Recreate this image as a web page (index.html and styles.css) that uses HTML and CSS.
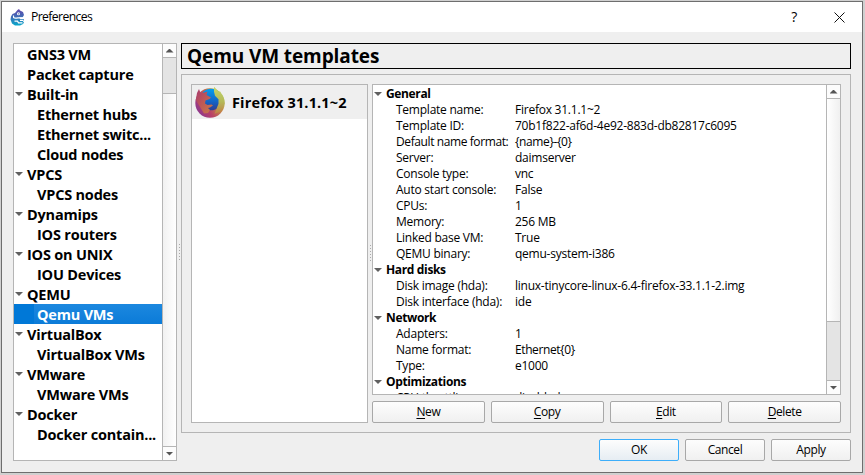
FILE: index.html
```html
<!DOCTYPE html>
<html lang="en">
<head>
<meta charset="utf-8">
<title>Preferences</title>
<link rel="stylesheet" href="styles.css">
</head>
<body>
<div class="window">
  <header class="titlebar">
    <svg class="app-icon" viewBox="0 0 16 17">
      <defs><linearGradient id="gecko" x1="0" y1="0" x2="0" y2="1"><stop offset="0" stop-color="#6446ac"/><stop offset=".5" stop-color="#3d6fb7"/><stop offset="1" stop-color="#08a9cb"/></linearGradient></defs>
      <path fill="url(#gecko)" d="M7.500 1L9 0l1 1.500 3 1.500 1 3-1.500 2.500H9L10.500 10H14l-1 2.500 1 1-1 1.500-3 1.500H5l-3-2-1.500-4L1 7.500l1.500-2.500L5 4z"/>
      <path fill="none" stroke="#fff" stroke-width="1.200" d="M3.500 6.500C3 9.500 5 9.500 8 8.800h6M4.500 12.200h3l1 1.600h4M10 11.300h3"/>
      <circle cx="8.500" cy="4.800" r="1.500" fill="#fff"/><circle cx="8.700" cy="4.800" r=".6" fill="#354887"/>
    </svg>
    <span class="caption">Preferences</span>
    <span class="help">?</span>
    <svg class="close" viewBox="0 0 11 11"><path d="M.5.5l10 10M10.500.5l-10 10" stroke="#111" fill="none"/></svg>
  </header>
  <main class="content">
    <nav class="sidebar frame">
      <ul class="nav-tree">
        <li>GNS3 VM</li>
        <li>Packet capture</li>
        <li class="open">Built-in</li>
        <li class="child">Ethernet hubs</li>
        <li class="child">Ethernet switc...</li>
        <li class="child">Cloud nodes</li>
        <li class="open">VPCS</li>
        <li class="child">VPCS nodes</li>
        <li class="open">Dynamips</li>
        <li class="child">IOS routers</li>
        <li class="open">IOS on UNIX</li>
        <li class="child">IOU Devices</li>
        <li class="open">QEMU</li>
        <li class="child selected">Qemu VMs</li>
        <li class="open">VirtualBox</li>
        <li class="child">VirtualBox VMs</li>
        <li class="open">VMware</li>
        <li class="child">VMware VMs</li>
        <li class="open">Docker</li>
        <li class="child">Docker contain...</li>
      </ul>
      <div class="scrollbar">
        <div class="step up"></div><div class="thumb thumb-top"></div><div class="track"></div><div class="step down"></div>
      </div>
    </nav>
    <div class="splitter"></div>
    <section class="page">
      <h1>Qemu VM templates</h1>
      <div class="group">
        <div class="templates frame">
          <div class="template">
            <svg class="firefox" viewBox="0 0 32 32">
              <defs>
                <linearGradient id="fox" gradientUnits="userSpaceOnUse" x1="3" y1="26" x2="30" y2="10"><stop offset="0" stop-color="#8a3890"/><stop offset=".35" stop-color="#b94067"/><stop offset=".7" stop-color="#c58545"/><stop offset="1" stop-color="#b5cf64"/></linearGradient>
                <linearGradient id="globe" x1="0" y1="0" x2="0" y2="1"><stop offset="0" stop-color="#009ff0"/><stop offset=".6" stop-color="#1463c5"/><stop offset="1" stop-color="#303c91"/></linearGradient>
                <linearGradient id="tail" x1="0" y1="0" x2="0" y2="1"><stop offset="0" stop-color="#c0d66e"/><stop offset=".55" stop-color="#b5b957"/><stop offset="1" stop-color="#c08046"/></linearGradient>
                <linearGradient id="face" x1="0" y1="0" x2="1" y2="1"><stop offset="0" stop-color="#a83a70"/><stop offset=".5" stop-color="#c05a55"/><stop offset="1" stop-color="#c77c48"/></linearGradient>
              </defs>
              <circle cx="16" cy="17" r="14.700" fill="url(#fox)"/>
              <circle cx="17" cy="13.500" r="10.800" fill="url(#globe)"/>
              <path fill="url(#face)" d="M1.800 14L3 7l2-4 1.500 4 4-.5 3-1-1 3.500 4.500 2.500-1.500 1.500-4 1.500-.5 3 2.500 1.500 4-.5 1.500 1-3 2-2 .5 2 2-2 3-4 .5z"/>
              <path fill="url(#tail)" d="M20 .8l5 5 1-.5 4 7.500.6 5-4 8-6.100 2 2-5 2-5 0-4.500-3.500-3.500-1-4z"/>
            </svg>
            <span>Firefox 31.1.1~2</span>
          </div>
        </div>
        <div class="splitter inner"></div>
        <div class="details">
          <div class="info frame">
            <div class="properties">
              <h2>General</h2>
              <dl>
                <dt>Template name:</dt><dd>Firefox 31.1.1~2</dd>
                <dt>Template ID:</dt><dd>70b1f822-af6d-4e92-883d-db82817c6095</dd>
                <dt class="tight">Default name format:</dt><dd class="tight">{name}-{0}</dd>
                <dt>Server:</dt><dd>daimserver</dd>
                <dt>Console type:</dt><dd>vnc</dd>
                <dt>Auto start console:</dt><dd>False</dd>
                <dt>CPUs:</dt><dd>1</dd>
                <dt>Memory:</dt><dd>256 MB</dd>
                <dt>Linked base VM:</dt><dd>True</dd>
                <dt>QEMU binary:</dt><dd>qemu-system-i386</dd>
              </dl>
              <h2>Hard disks</h2>
              <dl>
                <dt>Disk image (hda):</dt><dd>linux-tinycore-linux-6.4-firefox-33.1.1-2.img</dd>
                <dt>Disk interface (hda):</dt><dd>ide</dd>
              </dl>
              <h2>Network</h2>
              <dl>
                <dt>Adapters:</dt><dd>1</dd>
                <dt>Name format:</dt><dd class="tight">Ethernet{0}</dd>
                <dt>Type:</dt><dd>e1000</dd>
              </dl>
              <h2>Optimizations</h2>
              <dl><dt>CPU throttling:</dt><dd>disabled</dd></dl>
            </div>
            <div class="scrollbar">
              <div class="step up"></div><div class="track"></div><div class="thumb thumb-bottom"></div><div class="step down"></div>
            </div>
          </div>
          <div class="actions">
            <button><u>N</u>ew</button><button><u>C</u>opy</button><button><u>E</u>dit</button><button><u>D</u>elete</button>
          </div>
        </div>
      </div>
      <footer class="dialog-buttons">
        <button class="default">OK</button><button>Cancel</button><button>Apply</button>
      </footer>
    </section>
  </main>
</div>
</body>
</html>
```

FILE: styles.css
```css
* { box-sizing: border-box; }
body {
  margin: 0;
  width: 865px;
  height: 475px;
  padding: 1px 2px 2px 1px;
  overflow: hidden;
  background: #d0d0d0;
  color: #000;
  font: 12px/16px "Open Sans", "Noto Sans", sans-serif;
  letter-spacing: -0.24px;
}
.window {
  width: 862px;
  height: 472px;
  border: 1px solid #6e6e6e;
  background: #efefef;
}
.titlebar {
  display: flex;
  align-items: center;
  height: 30px;
  padding: 0 17px 0 8px;
  background: #fff;
}
.app-icon { width: 16px; height: 17px; }
.caption { margin-left: 5px; letter-spacing: -0.6px; font-size: 12.2px; }
.help { margin-left: auto; margin-right: 37px; font-size: 14px; }
.close { width: 11px; height: 11px; }
.content { display: flex; padding: 11px 10px 0 11px; }
.frame { border: 1px solid #b5b5b5; background: #fff; }
.sidebar { display: flex; width: 164px; height: 418px; }
.nav-tree {
  flex: 1;
  margin: 0;
  padding: 0;
  list-style: none;
  font: bold 14.5px/22px "Open Sans", "Noto Sans", sans-serif;
  letter-spacing: -0.2px;
}
.nav-tree li { height: 20px; padding-left: 13px; white-space: nowrap; }
.nav-tree .child { padding-left: 23px; }
.nav-tree .open, .properties h2 { display: flex; }
.nav-tree .open { padding-left: 1px; }
.nav-tree .open::before, .properties h2::before {
  content: "";
  width: 8px;
  height: 4px;
  margin: 8px 4px 0 0;
  background: #606060;
  clip-path: polygon(0 0, 100% 0, 50% 100%);
}
.nav-tree .selected {
  color: #fff;
  background: linear-gradient(to right, #0078d7 20px, transparent 20px), linear-gradient(#1c88df, #0b7bd8);
}
.scrollbar {
  display: flex;
  flex-direction: column;
  width: 14px;
  border-left: 1px solid #b5b5b5;
}
.step { display: grid; place-items: center; height: 14px; background: #fcfcfc; }
.step::before { content: ""; width: 8px; height: 4px; background: #555; }
.up { border-bottom: 1px solid #b5b5b5; }
.up::before { clip-path: polygon(0 100%, 50% 0, 100% 100%); }
.down { border-top: 1px solid #b5b5b5; }
.down::before { clip-path: polygon(0 0, 100% 0, 50% 100%); }
.track { flex: 1; background: linear-gradient(to right, #f1f1f1, #fff); }
.info .track { background: linear-gradient(to right, #fff, #f0f0f0); }
.thumb { background: #e4e4e4; }
.thumb-top { height: 36px; border-bottom: 1px solid #b5b5b5; }
.thumb-bottom { height: 59px; border-top: 1px solid #b5b5b5; }
.splitter { display: flex; align-items: center; width: 4px; height: 418px; }
.splitter::before {
  content: "";
  width: 1px;
  height: 17px;
  margin-left: 2px;
  background: repeating-linear-gradient(#aaa 0 1px, transparent 1px 3px);
}
.page { width: 670px; }
h1 {
  height: 26px;
  margin: 0 0 5px;
  padding-left: 5px;
  border: 1px solid #000;
  font: bold 19px/25px "Open Sans", "Noto Sans", sans-serif;
  letter-spacing: -0.1px;
}
.group {
  display: flex;
  height: 359px;
  padding: 9px;
  border: 1px solid #b5b5b5;
}
.templates { width: 177px; height: 339px; }
.template {
  display: flex;
  align-items: center;
  height: 34px;
  padding-left: 2px;
  background: #efefef;
  font-size: 14.5px;
  font-weight: bold;
  letter-spacing: 0.15px;
  white-space: nowrap;
}
.template span { padding-top: 2px; }
.firefox { width: 32px; height: 32px; margin-right: 6px; }
.inner { height: 339px; }
.details { width: 469px; }
.info { display: flex; height: 311px; overflow: hidden; }
.properties { flex: 1; height: 309px; padding-top: 1px; overflow: hidden; }
.properties h2 { height: 16px; margin: 0; padding-left: 1px; font-size: 12px; line-height: 16px; letter-spacing: -0.35px; }
.properties h2::before { margin-top: 6px; }
.properties dl { display: grid; grid-template-columns: 119px 1fr; margin: 0; padding-left: 23px; }
.properties dt, .properties dd { height: 16px; margin: 0; white-space: nowrap; }
.properties .tight { letter-spacing: -0.4px; }
.actions { display: grid; grid-template-columns: repeat(4, 1fr); gap: 6px; margin-top: 6px; }
button {
  height: 22px;
  padding: 0;
  border: 1px solid #a8a8a8;
  border-radius: 2px;
  background: linear-gradient(#fdfdfd, #f0f0f0);
  color: #000;
  font: inherit;
  letter-spacing: -0.4px;
}
u { text-underline-offset: 2px; }
.dialog-buttons { display: flex; justify-content: flex-end; gap: 6px; margin-top: 6px; }
.dialog-buttons button { width: 80px; }
.dialog-buttons .default { border-color: #3daefa; background: linear-gradient(#fdfdfd, #e6edf3); }
```
